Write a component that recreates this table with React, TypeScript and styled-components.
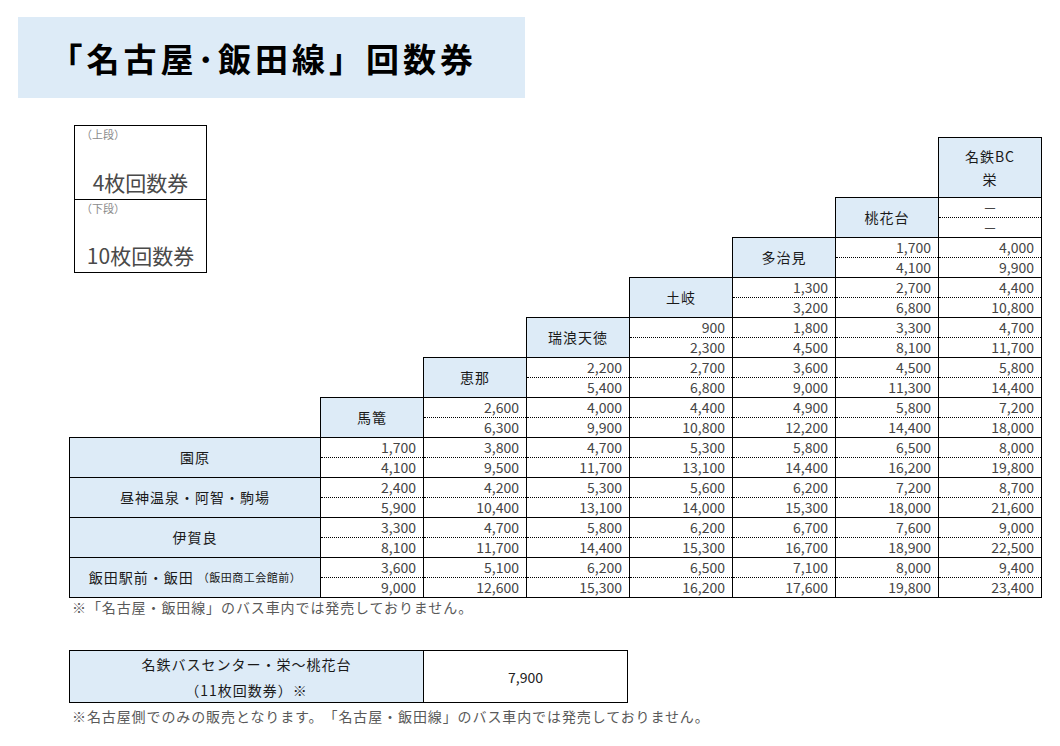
import React from "react";
import styled, { createGlobalStyle } from "styled-components";

const BLUE = "#DDEBF7";

const GlobalStyle = createGlobalStyle`
  html, body { margin: 0; padding: 0; background: #fff; }
  body {
    font-family: "Noto Sans CJK JP", "Noto Sans", sans-serif;
    color: #222;
    text-spacing-trim: space-all;
  }
  * { box-sizing: border-box; }
`;

const Page = styled.div`
  width: 1060px;
  height: 746px;
  overflow: hidden;
  padding-top: 17px;
`;

const TitleBar = styled.h1`
  margin: 0 0 0 18px;
  width: 507px;
  height: 81px;
  background: ${BLUE};
  display: flex;
  align-items: center;
  justify-content: center;
  font-size: 33px;
  font-weight: 700;
  letter-spacing: 4px;
  color: #000;
  text-spacing-trim: trim-start;
`;

const Body = styled.section`
  padding-left: 69px;
  margin-top: 27px;
`;

const FareGrid = styled.div`
  display: grid;
  grid-template-columns: 251px repeat(7, 103px);
  grid-template-rows: 12px 60px repeat(10, 40px);
`;

const Cell = styled.div<{ $col: number; $row: number }>`
  grid-column: ${(p) => p.$col};
  grid-row: ${(p) => p.$row};
  border: 1px solid #000;
  margin: 0 -1px -1px 0;
`;

const HeaderCell = styled(Cell)`
  background: ${BLUE};
  display: flex;
  align-items: center;
  justify-content: center;
  text-align: center;
  font-size: 14px;
  letter-spacing: 1px;
  line-height: 23px;
  color: #1a1a1a;
`;

const SmallNote = styled.span`
  font-size: 11px;
  letter-spacing: 0.5px;
  margin-left: 4px;
`;

const FareCell = styled(Cell)`
  display: grid;
  grid-template-rows: 20px 1fr;
`;

const Fare = styled.div<{ $center?: boolean }>`
  font-size: 14px;
  line-height: 19px;
  color: #454545;
  text-align: ${(p) => (p.$center ? "center" : "right")};
  padding-right: ${(p) => (p.$center ? "0" : "7px")};
  &:first-child {
    border-bottom: 1px dotted #000;
  }
`;

const Legend = styled.div`
  grid-column: 1;
  grid-row: 1 / span 4;
  align-self: start;
  justify-self: start;
  margin-left: 5px;
  width: 133px;
  height: 148px;
  border: 1px solid #000;
  display: grid;
  grid-template-rows: 74px 1fr;
`;

const LegendHalf = styled.div`
  display: flex;
  flex-direction: column;
  padding: 1px 0 4px 6px;
  &:first-child {
    border-bottom: 1px solid #000;
  }
`;

const LegendLabel = styled.div`
  font-size: 11px;
  line-height: 14px;
  color: #8c8c8c;
`;

const LegendValue = styled.div`
  margin-top: auto;
  padding-right: 6px;
  text-align: center;
  font-size: 21px;
  line-height: 26px;
  color: #4a4a4a;
`;

const Note = styled.p<{ $top?: number }>`
  margin: ${(p) => p.$top ?? 0}px 0 0 3px;
  font-size: 14px;
  line-height: 18px;
  letter-spacing: 0.9px;
  color: #595959;
`;

const SpecialTable = styled.div`
  margin-top: 34px;
  display: grid;
  grid-template-columns: 354px 205px;
  grid-template-rows: 53px;
`;

const SpecialLabel = styled.div`
  background: ${BLUE};
  border: 1px solid #000;
  margin-right: -1px;
  display: flex;
  flex-direction: column;
  align-items: center;
  justify-content: center;
  font-size: 14px;
  letter-spacing: 1px;
  line-height: 26px;
  color: #1a1a1a;
`;

const SpecialValue = styled.div`
  border: 1px solid #000;
  display: flex;
  align-items: center;
  justify-content: center;
  font-size: 14px;
  color: #222;
`;

type Row = { name: React.ReactNode; fares: [string, string][] };

// Column index 2..8: 馬篭, 恵那, 瑞浪天徳, 土岐, 多治見, 桃花台, 名鉄BC栄
const staircase: { name: React.ReactNode; col: number; row: number; fares: [string, string][] }[] = [
  { name: <>名鉄BC<br />栄</>, col: 8, row: 2, fares: [] },
  { name: "桃花台", col: 7, row: 3, fares: [["－", "－"]] },
  { name: "多治見", col: 6, row: 4, fares: [["1,700", "4,100"], ["4,000", "9,900"]] },
  { name: "土岐", col: 5, row: 5, fares: [["1,300", "3,200"], ["2,700", "6,800"], ["4,400", "10,800"]] },
  { name: "瑞浪天徳", col: 4, row: 6, fares: [["900", "2,300"], ["1,800", "4,500"], ["3,300", "8,100"], ["4,700", "11,700"]] },
  { name: "恵那", col: 3, row: 7, fares: [["2,200", "5,400"], ["2,700", "6,800"], ["3,600", "9,000"], ["4,500", "11,300"], ["5,800", "14,400"]] },
  { name: "馬篭", col: 2, row: 8, fares: [["2,600", "6,300"], ["4,000", "9,900"], ["4,400", "10,800"], ["4,900", "12,200"], ["5,800", "14,400"], ["7,200", "18,000"]] },
];

const bottomRows: Row[] = [
  { name: "園原", fares: [["1,700", "4,100"], ["3,800", "9,500"], ["4,700", "11,700"], ["5,300", "13,100"], ["5,800", "14,400"], ["6,500", "16,200"], ["8,000", "19,800"]] },
  { name: "昼神温泉・阿智・駒場", fares: [["2,400", "5,900"], ["4,200", "10,400"], ["5,300", "13,100"], ["5,600", "14,000"], ["6,200", "15,300"], ["7,200", "18,000"], ["8,700", "21,600"]] },
  { name: "伊賀良", fares: [["3,300", "8,100"], ["4,700", "11,700"], ["5,800", "14,400"], ["6,200", "15,300"], ["6,700", "16,700"], ["7,600", "18,900"], ["9,000", "22,500"]] },
  { name: <>飯田駅前・飯田<SmallNote>（飯田商工会館前）</SmallNote></>, fares: [["3,600", "9,000"], ["5,100", "12,600"], ["6,200", "15,300"], ["6,500", "16,200"], ["7,100", "17,600"], ["8,000", "19,800"], ["9,400", "23,400"]] },
];

export default function App() {
  return (
    <Page>
      <GlobalStyle />
      <TitleBar>「名古屋･飯田線」回数券</TitleBar>
      <Body>
        <FareGrid>
          <Legend>
            <LegendHalf>
              <LegendLabel>（上段）</LegendLabel>
              <LegendValue>4枚回数券</LegendValue>
            </LegendHalf>
            <LegendHalf>
              <LegendLabel>（下段）</LegendLabel>
              <LegendValue>10枚回数券</LegendValue>
            </LegendHalf>
          </Legend>
          {staircase.map((s) => (
            <React.Fragment key={s.col}>
              <HeaderCell $col={s.col} $row={s.row}>{s.name}</HeaderCell>
              {s.fares.map((f, i) => (
                <FareCell key={i} $col={s.col + 1 + i} $row={s.row}>
                  <Fare $center={f[0] === "－"}>{f[0]}</Fare>
                  <Fare $center={f[1] === "－"}>{f[1]}</Fare>
                </FareCell>
              ))}
            </React.Fragment>
          ))}
          {bottomRows.map((r, ri) => (
            <React.Fragment key={ri}>
              <HeaderCell $col={1} $row={9 + ri}>{r.name}</HeaderCell>
              {r.fares.map((f, i) => (
                <FareCell key={i} $col={2 + i} $row={9 + ri}>
                  <Fare>{f[0]}</Fare>
                  <Fare>{f[1]}</Fare>
                </FareCell>
              ))}
            </React.Fragment>
          ))}
        </FareGrid>
        <Note $top={1}>※「名古屋・飯田線」のバス車内では発売しておりません。</Note>
        <SpecialTable>
          <SpecialLabel>
            <span>名鉄バスセンター・栄～桃花台</span>
            <span>（11枚回数券）※</span>
          </SpecialLabel>
          <SpecialValue>7,900</SpecialValue>
        </SpecialTable>
        <Note $top={4}>※名古屋側でのみの販売となります。「名古屋・飯田線」のバス車内では発売しておりません。</Note>
      </Body>
    </Page>
  );
}
